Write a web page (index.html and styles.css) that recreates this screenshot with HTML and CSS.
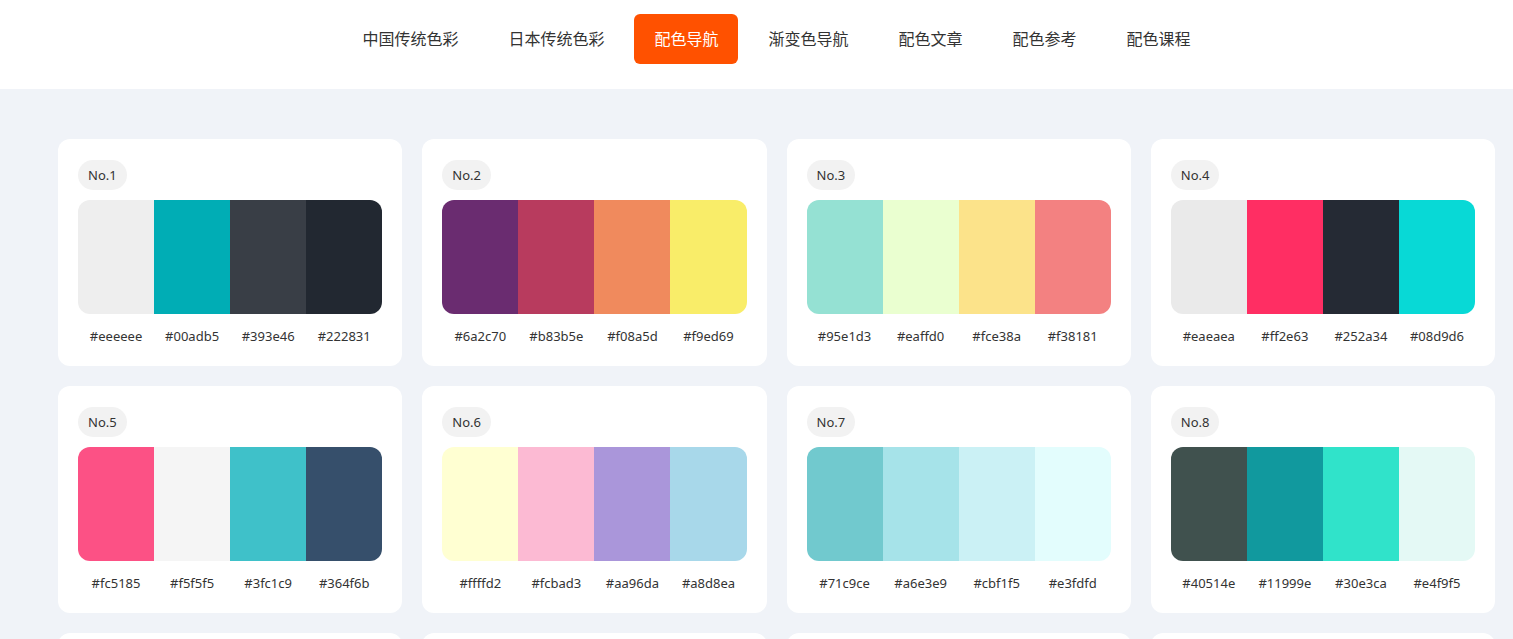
FILE: index.html
```html
<!DOCTYPE html>
<html lang="zh-CN">
<head>
    <meta charset="UTF-8">
    <meta name="viewport" content="width=device-width, initial-scale=1.0">
    <title>配色导航</title>
    <link rel="stylesheet" href="styles.css">
</head>
<body>

    <div class="header">
        <ul class="nav">
            <li><a href="#">中国传统色彩</a></li>
            <li><a href="#">日本传统色彩</a></li>
            <li><a href="#" class="active">配色导航</a></li>
            <li><a href="#">渐变色导航</a></li>
            <li><a href="#">配色文章</a></li>
            <li><a href="#">配色参考</a></li>
            <li><a href="#">配色课程</a></li>
        </ul>
    </div>

    <div class="main">
        <div class="palettes" id="palettes"></div>
    </div>

    <script>
        const palettes = [
            ['#eeeeee', '#00adb5', '#393e46', '#222831'],
            ['#6a2c70', '#b83b5e', '#f08a5d', '#f9ed69'],
            ['#95e1d3', '#eaffd0', '#fce38a', '#f38181'],
            ['#eaeaea', '#ff2e63', '#252a34', '#08d9d6'],
            ['#fc5185', '#f5f5f5', '#3fc1c9', '#364f6b'],
            ['#ffffd2', '#fcbad3', '#aa96da', '#a8d8ea'],
            ['#71c9ce', '#a6e3e9', '#cbf1f5', '#e3fdfd'],
            ['#40514e', '#11999e', '#30e3ca', '#e4f9f5'],
            ['#e23e57', '#88304e', '#522546', '#311d3f'],
            ['#f9f7f7', '#dbe2ef', '#3f72af', '#112d4e'],
            ['#ffc7c7', '#ffe2e2', '#f6f6f6', '#8785a2'],
            ['#00b8a9', '#f8f3d4', '#f6416c', '#ffde7d']
        ];

        const box = document.getElementById('palettes');

        palettes.forEach((colors, i) => {
            const card = document.createElement('div');
            card.className = 'card';

            let html = '<div class="top"><span class="badge">No.' + (i + 1) + '</span></div>';
            html += '<div class="swatches">';
            colors.forEach(c => {
                html += '<div class="swatch" style="background:' + c + '"></div>';
            });
            html += '</div><div class="codes">';
            colors.forEach(c => {
                html += '<span>' + c + '</span>';
            });
            html += '</div>';

            card.innerHTML = html;
            box.appendChild(card);
        });
    </script>

</body>
</html>
```

FILE: styles.css
```css
body {
    margin: 0;
    padding: 0;
    font-family: "Noto Sans", "Noto Sans CJK SC", sans-serif;
    background-color: #f0f3f8;
    color: #333;
}
.header {
    background-color: #fff;
    height: 89px;
    box-sizing: border-box;
    padding: 14px 0 0 40px;
    display: flex;
    justify-content: center;
    align-items: flex-start;
}
.nav {
    list-style: none;
    margin: 0;
    padding: 0;
    display: flex;
    gap: 10px;
}
.nav a {
    display: block;
    height: 50px;
    line-height: 50px;
    padding: 0 20px;
    font-size: 16px;
    color: #333;
    text-decoration: none;
    border-radius: 6px;
}
.nav a.active {
    background-color: #ff5100;
    color: #fff;
}
.main {
    padding: 50px 0 0 58px;
}
.palettes {
    display: grid;
    width: 1437px;
    grid-template-columns: repeat(4, 1fr);
    gap: 20px;
}
.card {
    background-color: #fff;
    border-radius: 12px;
    padding: 21px 20px 20px;
}
.top {
    display: flex;
}
.badge {
    height: 30px;
    line-height: 30px;
    padding: 0 10px;
    font-size: 13px;
    background-color: #f2f2f2;
    border-radius: 15px;
}
.swatches {
    display: flex;
    height: 114px;
    margin-top: 10px;
    border-radius: 12px;
    overflow: hidden;
}
.swatch {
    flex: 1;
}
.codes {
    display: flex;
    margin-top: 12px;
}
.codes span {
    flex: 1;
    text-align: center;
    font-size: 13px;
    line-height: 20px;
}
```
